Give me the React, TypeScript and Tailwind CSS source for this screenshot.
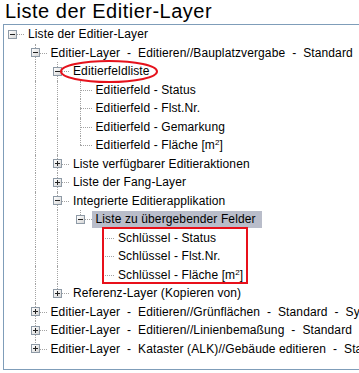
import React from 'react';

type TreeNode = {
  label: string;
  children?: TreeNode[];
  open?: boolean;
  selected?: boolean;
  mark?: 'ellipse' | 'box';
};

const tree: TreeNode = {
  label: 'Liste der Editier-Layer',
  open: true,
  children: [
    {
      label: 'Editier-Layer  -  Editieren//Bauplatzvergabe  -  Standard',
      open: true,
      children: [
        {
          label: 'Editierfeldliste',
          open: true,
          mark: 'ellipse',
          children: [
            { label: 'Editierfeld - Status' },
            { label: 'Editierfeld - Flst.Nr.' },
            { label: 'Editierfeld - Gemarkung' },
            { label: 'Editierfeld - Fläche [m²]' },
          ],
        },
        { label: 'Liste verfügbarer Editieraktionen', children: [{ label: '' }] },
        { label: 'Liste der Fang-Layer', children: [{ label: '' }] },
        {
          label: 'Integrierte Editierapplikation',
          open: true,
          children: [
            {
              label: 'Liste zu übergebender Felder',
              open: true,
              selected: true,
              mark: 'box',
              children: [
                { label: 'Schlüssel - Status' },
                { label: 'Schlüssel - Flst.Nr.' },
                { label: 'Schlüssel - Fläche [m²]' },
              ],
            },
          ],
        },
        { label: 'Referenz-Layer (Kopieren von)', children: [{ label: '' }] },
      ],
    },
    { label: 'Editier-Layer  -  Editieren//Grünflächen  -  Standard  -  System', children: [{ label: '' }] },
    { label: 'Editier-Layer  -  Editieren//Linienbemaßung  -  Standard', children: [{ label: '' }] },
    { label: 'Editier-Layer  -  Kataster (ALK)//Gebäude editieren  -  Standard', children: [{ label: '' }] },
  ],
};

const dots = 'border-dotted border-[#a3a3a3]';

const Guide = ({ on }: { on: boolean }) => (
  <div className="relative h-full w-[22.5px] shrink-0">
    {on && <div className={`absolute left-[8px] top-0 h-full border-l ${dots}`} />}
  </div>
);

const Expander = ({ open }: { open: boolean }) => (
  <div className="absolute left-[4px] top-1/2 -mt-[4.5px] flex h-[9px] w-[9px] items-center justify-center border border-[#8e9aa6] bg-gradient-to-br from-white to-[#d6d6d6]">
    <div className="h-px w-[5px] bg-[#222]" />
    {!open && <div className="absolute h-[5px] w-px bg-[#222]" />}
  </div>
);

const Label = ({ label }: { label: string }) => {
  const parts = label.split('²');
  if (parts.length === 1) return <>{label}</>;
  return (
    <>
      {parts[0]}
      <span className="align-[4px] text-[8px]">2</span>
      {parts[1]}
    </>
  );
};

const Branch = ({
  node,
  guides,
  last,
  root,
}: {
  node: TreeNode;
  guides: boolean[];
  last: boolean;
  root?: boolean;
}) => {
  const hasKids = !!node.children?.length;

  return (
    <>
      <div className="relative flex h-[18.5px] items-center whitespace-pre">
        {guides.map((g, i) => (
          <Guide key={i} on={g} />
        ))}
        <div className="relative h-full w-[24px] shrink-0">
          {!root && (
            <div className={`absolute left-[8px] top-0 border-l ${dots} ${last ? 'h-1/2' : 'h-full'}`} />
          )}
          <div className={`absolute left-[8px] top-1/2 w-[12px] border-t ${dots}`} />
          {hasKids && <Expander open={!!node.open} />}
        </div>
        {node.selected ? (
          <span className="-ml-[4px] flex h-[17px] items-center bg-[#b9bdca] pl-[4px] pr-[6px]">
            <Label label={node.label} />
          </span>
        ) : (
          <span>
            <Label label={node.label} />
          </span>
        )}
        {node.mark === 'ellipse' && (
          <svg className="absolute left-[53px] top-[-3px] h-[26px] w-[104px]" viewBox="0 0 104 26">
            <ellipse cx="52" cy="12.5" rx="48" ry="10.5" fill="none" stroke="#e5121c" strokeWidth="2" />
          </svg>
        )}
      </div>
      {hasKids && node.open && (
        <div className={node.mark === 'box' ? 'relative' : undefined}>
          {node.children!.map((c, i) => (
            <Branch
              key={i}
              node={c}
              guides={[...guides, !last]}
              last={i === node.children!.length - 1}
            />
          ))}
          {node.mark === 'box' && (
            <div className="absolute left-[97.5px] top-[-1.5px] h-[57px] w-[146px] border-2 border-[#e8101a]" />
          )}
        </div>
      )}
    </>
  );
};

export default function App() {
  return (
    <div
      className="h-[373px] w-[359px] overflow-hidden bg-white text-black"
      style={{ fontFamily: '"Liberation Sans", Arial, sans-serif' }}
    >
      <div className="h-[24px] pl-[5px] text-[20px] leading-[22px] tracking-[0.5px]">Liste der Editier-Layer</div>
      <div className="ml-[3px] h-[346px] w-[420px] border border-[#7f9db9] text-[12px] tracking-[0.12px]">
        <Branch node={tree} guides={[]} last root />
      </div>
    </div>
  );
}
